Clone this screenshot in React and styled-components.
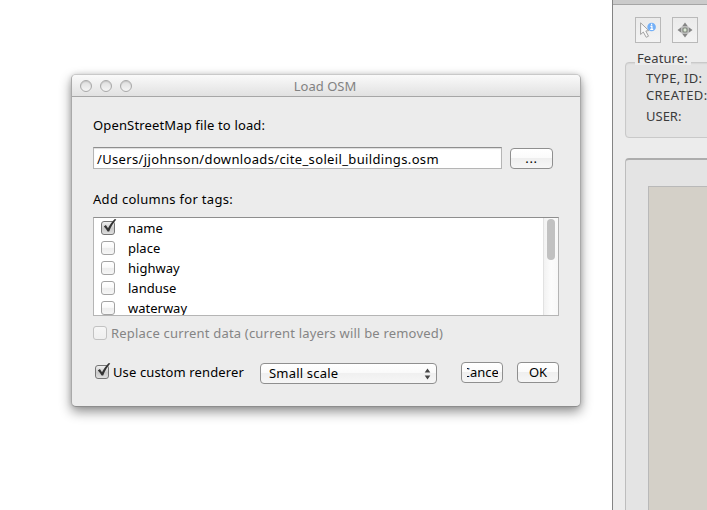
import React from 'react';
import styled, { createGlobalStyle } from 'styled-components';

const GlobalStyle = createGlobalStyle`
  * { box-sizing: border-box; }
  body { margin: 0; background: #fff; overflow: hidden; }
`;

const Desktop = styled.div`
  position: relative;
  width: 707px;
  height: 510px;
  overflow: hidden;
  display: flex;
  justify-content: flex-end;
  background: #fff;
  color: #000;
  font: 13px/20px 'Noto Sans', 'Open Sans', sans-serif;
`;

/* Docked feature panel */
const Panel = styled.aside`
  width: 95px;
  height: 510px;
  overflow: hidden;
  border-left: 1px solid #848484;
  background: #ececec;
  display: flex;
  flex-direction: column;
  color: #3b3b3b;
`;
const PanelBar = styled.div`
  height: 5px;
  flex: none;
  background: #cbcbcb;
  border-bottom: 1px solid #a6a6a6;
`;
const Tools = styled.div`
  display: flex;
  gap: 11px;
  padding: 12px 0 0 22px;
`;
const ToolButton = styled.button`
  width: 26px;
  height: 26px;
  flex: none;
  padding: 0;
  border: 1px solid #b9b9b9;
  background: linear-gradient(#ebebeb, #f3f3f3);
  display: grid;
  place-items: center;
`;
const Group = styled.fieldset`
  margin: 11px -10px 0 12px;
  height: 84px;
  padding: 0 0 0 20px;
  border: 1px solid #c9c9c9;
  border-radius: 4px;
  min-width: 0;
  background: #e4e4e4;
  box-shadow: inset 0 1px 1px #d6d6d6;
`;
const GroupTitle = styled.legend`
  margin-left: -11px;
  padding: 0 2px;
  width: 56px;
  height: 16px;
  line-height: 8px;
  letter-spacing: 0.1px;
  white-space: nowrap;
  background: linear-gradient(#ececec, #ececec) 0 0 / 100% 11px no-repeat;
`;
const Field = styled.div`
  height: ${(p) => p.$h}px;
  line-height: 17px;
  white-space: nowrap;
  letter-spacing: ${(p) => p.$track || 0}px;
`;
const Frame = styled.div`
  flex: 1;
  margin: 20px -10px -10px 12px;
  padding: 26px 0 0 22px;
  border: 1px solid #bdbdbd;
  border-top: 2px solid #adadad;
  border-radius: 4px;
  background: #e4e4e4;
  display: flex;
`;
const Canvas = styled.div`
  flex: 1;
  border: 1px solid #b9b9b9;
  background: #d4d0c8;
`;

/* Dialog window floating over the desktop */
const Dialog = styled.section`
  position: absolute;
  left: 71px;
  top: 74px;
  width: 510px;
  height: 333px;
  border: 1px solid #a9a9a9;
  border-top-color: #c9c9c9;
  border-bottom-color: #8d8d8d;
  border-radius: 5px;
  background: #ececec;
  box-shadow: 0 5px 12px rgba(0, 0, 0, 0.42), 0 0 5px rgba(0, 0, 0, 0.12);
`;
const TitleBar = styled.header`
  height: 22px;
  padding-left: 8px;
  border-bottom: 1px solid #a6a6a6;
  border-radius: 4px 4px 0 0;
  background: linear-gradient(#fafafa, #e1e1e1);
  display: grid;
  grid-template-columns: 59px 1fr 69px;
  align-items: center;
`;
const Lights = styled.div`
  display: flex;
  gap: 8px;
`;
const Light = styled.span`
  width: 12px;
  height: 12px;
  border: 1px solid #a9a9a9;
  border-radius: 50%;
  background: linear-gradient(#dedede, #f5f5f5);
  box-shadow: inset 0 1px 1px #c8c8c8;
`;
const Title = styled.h1`
  margin: 0;
  font: inherit;
  line-height: 20px;
  text-align: center;
  color: #828282;
`;
const Form = styled.div`
  padding: 18px 21px 0;
  display: flex;
  flex-direction: column;
`;
const Label = styled.label`
  height: 20px;
  white-space: nowrap;
  letter-spacing: ${(p) => p.$track}px;
  color: ${(p) => (p.$muted ? '#858585' : '#000')};
`;
const FileRow = styled.div`
  margin: 12px 0 20px;
  display: flex;
  gap: 8px;
  align-items: flex-end;
`;
const PathBox = styled.div`
  width: 409px;
  height: 22px;
  padding: 1px 0 0 3px;
  line-height: 21px;
  letter-spacing: 0.35px;
  white-space: nowrap;
  background: #fff;
  border: 1px solid #b5b5b5;
  border-top-color: #8e8e8e;
  box-shadow: inset 0 1px 1px #ddd;
`;
const PushButton = styled.button`
  width: ${(p) => p.$w}px;
  height: 21px;
  padding: 0 5px;
  overflow: hidden;
  border: 1px solid #8f8f8f;
  border-radius: 4px;
  background: linear-gradient(#fff 0%, #fbfbfb 45%, #efefef 50%, #f6f6f6 100%);
  font: inherit;
  line-height: 18px;
  letter-spacing: ${(p) => p.$track || 0}px;
  color: #000;
  display: flex;
  justify-content: center;
`;
const Clip = styled.span`
  width: 31px;
  flex: none;
  overflow: hidden;
  display: flex;
  justify-content: center;
`;
const TagList = styled.div`
  margin-top: 8px;
  height: 99px;
  border: 1px solid #b5b5b5;
  border-top-color: #8e8e8e;
  background: #fff;
  display: flex;
  overflow: hidden;
`;
const Rows = styled.div`
  flex: 1;
  padding-left: 7px;
`;
const TagRow = styled.div`
  height: 20px;
  display: flex;
  align-items: center;
  gap: 13px;
`;
const Track = styled.div`
  width: 15px;
  padding: 1px 0 0 3px;
  border-left: 1px solid #e2e2e2;
  background: linear-gradient(90deg, #f2f2f2, #fcfcfc 50%, #f8f8f8);
`;
const Thumb = styled.div`
  width: 8px;
  height: 41px;
  border-radius: 4px;
  background: #c1c1c1;
`;
const Box = styled.span`
  width: 14px;
  height: 14px;
  flex: none;
  border: 1px solid ${(p) => (p.$checked ? '#757575' : p.$muted ? '#c2c2c2' : '#a3a3a3')};
  border-radius: 3px;
  background: ${(p) =>
    p.$checked
      ? 'linear-gradient(#f0f0f0, #c9c9c9 55%, #dedede)'
      : p.$muted
        ? 'linear-gradient(#f6f6f6, #efefef)'
        : 'linear-gradient(#fff 0%, #fafafa 45%, #ededed 50%, #f6f6f6 100%)'};
`;
const Tick = styled.svg`
  display: block;
  width: 16px;
  height: 16px;
  margin: -4px 0 0 0;
  overflow: visible;
`;
const Option = styled.div`
  margin-top: 7px;
  height: 20px;
  display: flex;
  align-items: center;
  gap: 4px;
`;
const Footer = styled.div`
  margin-top: 19px;
  padding-left: 2px;
  height: 22px;
  display: flex;
  align-items: flex-start;
`;
const RendererOption = styled.div`
  width: 165px;
  height: 20px;
  display: flex;
  align-items: center;
  gap: 4px;
`;
const Select = styled.div`
  width: 177px;
  height: 21px;
  margin-top: 1px;
  padding: 0 5px 0 8px;
  border: 1px solid #8f8f8f;
  border-radius: 4px;
  background: linear-gradient(#fff 0%, #fafafa 45%, #f0f0f0 50%, #f6f6f6 100%);
  line-height: 19px;
  letter-spacing: 0.2px;
  display: flex;
  justify-content: space-between;
`;
const Stepper = styled.svg`
  width: 7px;
  height: 12px;
  margin-top: 4px;
`;
const Actions = styled.div`
  margin-left: auto;
  display: flex;
  gap: 14px;
`;

function Checkbox({ checked, muted }) {
  return (
    <Box $checked={checked} $muted={muted}>
      {checked && (
        <Tick viewBox="0 0 16 16">
          <path d="M1.8 8.6 3.9 7.1 6 10.3C7.7 6.6 10.2 3.2 12.8 .9L14.3 1.5C11.2 5.2 9 8.8 7.2 13.4L5.6 13.5C4.6 11.8 3.2 10 1.8 8.6Z" fill="#333" />
        </Tick>
      )}
    </Box>
  );
}

const tags = [
  { name: 'name', checked: true },
  { name: 'place' },
  { name: 'highway' },
  { name: 'landuse' },
  { name: 'waterway' },
];

export default function App() {
  return (
    <Desktop>
      <GlobalStyle />
      <Panel>
        <PanelBar />
        <Tools>
          <ToolButton aria-label="Identify feature">
            <svg width="24" height="24" viewBox="0 0 24 24">
              <path d="M4.6 4.8V16.5L7.3 14L10.2 19.3L12.5 18.2L9.8 13L12.8 12.6Z" fill="#f8f8f8" stroke="#a3a3a3" strokeWidth="1" />
              <circle cx="15.6" cy="9" r="4.3" fill="#74b0f7" />
              <path d="M14.4 8.4h1.5v3M14.2 11.4h3M15.6 5.8v1.4" fill="none" stroke="#fff" strokeWidth="1.2" />
            </svg>
          </ToolButton>
          <ToolButton aria-label="Move feature">
            <svg width="16" height="16" viewBox="0 0 16 16">
              <path d="M8 .5 11 4.5H5ZM8 15.5 5 11.5H11ZM.5 8 4.5 5V11ZM15.5 8 11.5 11V5Z" fill="#858585" />
              <rect x="4.5" y="4.5" width="7" height="7" fill="#b9b9b9" />
              <rect x="6" y="6" width="4" height="4" rx="1" fill="#dce8d6" stroke="#838a80" strokeWidth="1.2" />
            </svg>
          </ToolButton>
        </Tools>
        <Group>
          <GroupTitle>Feature:</GroupTitle>
          <Field $h={17} $track={0.25}>TYPE, ID:</Field>
          <Field $h={21} $track={0.4}>CREATED:</Field>
          <Field $h={17}>USER:</Field>
        </Group>
        <Frame>
          <Canvas />
        </Frame>
      </Panel>

      <Dialog>
        <TitleBar>
          <Lights>
            <Light />
            <Light />
            <Light />
          </Lights>
          <Title>Load OSM</Title>
        </TitleBar>
        <Form>
          <Label $track={0.15}>OpenStreetMap file to load:</Label>
          <FileRow>
            <PathBox>/Users/jjohnson/downloads/cite_soleil_buildings.osm</PathBox>
            <PushButton $w={43} $track={0.6}>...</PushButton>
          </FileRow>
          <Label $track={0.3}>Add columns for tags:</Label>
          <TagList>
            <Rows>
              {tags.map((tag) => (
                <TagRow key={tag.name}>
                  <Checkbox checked={tag.checked} />
                  <span>{tag.name}</span>
                </TagRow>
              ))}
            </Rows>
            <Track>
              <Thumb />
            </Track>
          </TagList>
          <Option>
            <Checkbox muted />
            <Label $muted $track={0.19}>Replace current data (current layers will be removed)</Label>
          </Option>
          <Footer>
            <RendererOption>
              <Checkbox checked />
              <Label $track={0.12}>Use custom renderer</Label>
            </RendererOption>
            <Select>
              Small scale
              <Stepper viewBox="0 0 7 12">
                <path d="M3.5 .5 6.3 4.5H.7ZM3.5 11.5 .7 7.5H6.3Z" fill="#444" />
              </Stepper>
            </Select>
            <Actions>
              <PushButton $w={42}>
                <Clip>Cancel</Clip>
              </PushButton>
              <PushButton $w={42}>OK</PushButton>
            </Actions>
          </Footer>
        </Form>
      </Dialog>
    </Desktop>
  );
}
